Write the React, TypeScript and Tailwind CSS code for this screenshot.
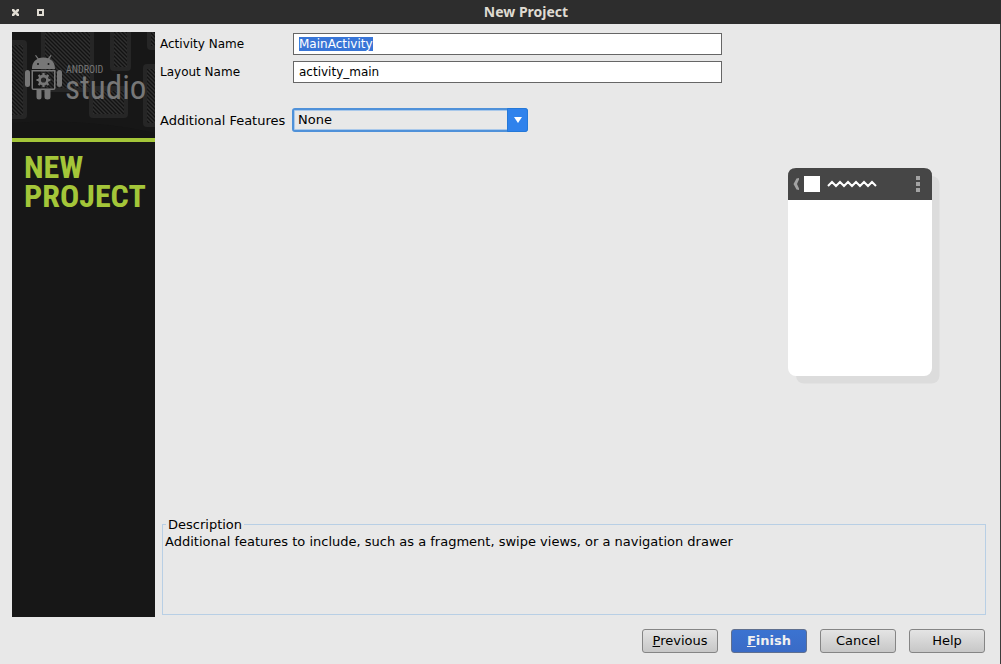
import { useEffect, useRef, useState } from "react";
import type { ReactNode } from "react";

function TitleBar() {
  return (
    <header className="flex h-6 items-center bg-[#2d2d2d] pl-3">
      <button type="button" aria-label="Close" className="flex h-6 w-[7px] items-center justify-center">
        <svg width="7" height="7" viewBox="0 0 7 7" fill="#dfdbd2">
          <path d="M0 0h2l1.500 1.700L5 0h2v2L5.300 3.500 7 5v2H5L3.500 5.300 2 7H0V5l1.700-1.500L0 2z" />
        </svg>
      </button>
      <button type="button" aria-label="Maximize" className="ml-[18px] flex h-6 w-[7px] items-center justify-center">
        <svg width="7" height="7" viewBox="0 0 7 7" fill="#dfdbd2" fillRule="evenodd">
          <path d="M0 0h7v7H0zM2 2v3h3V2z" />
        </svg>
      </button>
      <h1 className="flex-1 pl-[7px] text-center font-['Noto_Sans',sans-serif] text-[14px] font-bold leading-6 text-[#dfdbd2]">
        New Project
      </h1>
    </header>
  );
}

function Device({ x, y, w, h }: { x: number; y: number; w: number; h: number }) {
  return (
    <g>
      <rect x={x} y={y} width={w} height={h} rx="4" fill="#262626" />
      <rect x={x + 4} y={y + 5} width={w - 8} height={h - 9} fill="url(#hatch)" />
    </g>
  );
}

function StudioBanner() {
  return (
    <svg width="143" height="106" viewBox="0 0 143 106" role="img" aria-label="Android Studio" className="block">
      <defs>
        <pattern id="hatch" width="4" height="4" patternUnits="userSpaceOnUse">
          <rect width="4" height="4" fill="#131313" />
          <path d="M-1 -1L5 5M-1 3L1 5M3 -1L5 1" stroke="#303030" strokeWidth="1.400" />
        </pattern>
      </defs>
      <rect width="143" height="106" fill="#171717" />
      <Device x={-12} y={8} w={27} h={79} />
      <Device x={29} y={-8} w={53} h={68} />
      <Device x={98} y={-12} w={21} h={51} />
      <Device x={77} y={54} w={39} h={32} />
      <Device x={131} y={32} w={30} h={63} />
      <Device x={135} y={-10} w={24} h={28} />
      <path d="M0 91C45 87 100 91 143 101V106H0z" fill="#151515" />
      <g fill="#777777">
        <path d="M20 37C20 32 22 28.500 25.500 27L23 23.500 24 23 26.500 26.300Q31.500 24.500 36 26.300L38.500 23 39.500 23.500 37.500 27C41 28.500 43 32 43 37z" />
        <rect x="13" y="38" width="5" height="17" rx="2.500" />
        <rect x="45" y="38" width="5" height="17" rx="2.500" />
        <path fillRule="evenodd" d="M19.500 38H43.500V56Q43.500 58 41.500 58H38.500V65Q38.500 67.500 35.500 67.500T32.500 65V58H29.500V65Q29.500 67.500 27 67.500T24.500 65V58H21.500Q19.500 58 19.500 56zM21 39.500V56.500H42V39.500z" />
        <circle cx="31.500" cy="48" r="4" fill="none" stroke="#777777" strokeWidth="2.800" />
        <path
          d="M31.500 41V44M31.500 52V55M24.500 48H27.500M35.500 48H38.500M26.550 43.050L28.650 45.150M34.350 50.850L36.450 52.950M36.450 43.050L34.350 45.150M28.650 50.850L26.550 52.950"
          stroke="#777777"
          strokeWidth="2.200"
        />
      </g>
      <circle cx="26" cy="32" r="1" fill="#171717" />
      <circle cx="36.500" cy="32" r="1" fill="#171717" />
      <text x="54" y="41" fill="#777777" fontSize="10" className="font-['Roboto_Condensed','Liberation_Sans_Narrow',sans-serif]">
        ANDROID
      </text>
      <text x="53" y="67" fill="#777777" fontSize="33" className="font-['Roboto_Condensed','Liberation_Sans_Narrow',sans-serif]">
        studio
      </text>
    </svg>
  );
}

function Sidebar() {
  return (
    <aside className="flex w-[143px] shrink-0 flex-col bg-[#171717]">
      <StudioBanner />
      <div className="h-1 bg-[#a4c639]" />
      <h2 className="pl-3 pt-[11px] font-['Roboto_Condensed','Liberation_Sans_Narrow',sans-serif] text-[32px] font-bold leading-[29px] text-[#a4c639]">
        NEW
        <br />
        PROJECT
      </h2>
    </aside>
  );
}

function DevicePreview() {
  return (
    <svg width="152" height="216" viewBox="0 0 152 216" role="img" aria-label="Activity preview" className="block">
      <rect x="8" y="8" width="143.500" height="207.500" rx="8" fill="#dcdcdc" />
      <rect width="144" height="208" rx="8" fill="#fff" />
      <path d="M0 32V8Q0 0 8 0H136Q144 0 144 8V32z" fill="#464646" />
      <path d="M11 10L8.500 10.500 5.500 16 8.500 21.500 11 22V20.500L9 16 11 11.500z" fill="#a3a3a3" />
      <rect x="16" y="8" width="16" height="16" fill="#fff" />
      <path d="M40 18L44 14 48 18 52 14 56 18 60 14 64 18 68 14 72 18 76 14 80 18 84 14 88 18" fill="none" stroke="#fff" strokeWidth="2" />
      <path d="M128 8h4v4h-4zM128 14h4v4h-4zM128 20h4v4h-4z" fill="#a3a3a3" />
    </svg>
  );
}

function ActionButton({ children, primary = false }: { children: ReactNode; primary?: boolean }) {
  return (
    <button
      type="button"
      className={
        primary
          ? "h-6 w-[76px] rounded-[3px] border border-[#5f6f8f] bg-linear-to-b from-[#3b73d1] to-[#3a6bc6] text-center font-bold leading-[22px] text-[#f0f0f0]"
          : "h-6 w-[76px] rounded-[3px] border border-[#858585] bg-linear-to-b from-[#e4e4e4] to-[#c7c7c7] text-center leading-[22px]"
      }
    >
      {children}
    </button>
  );
}

export default function App() {
  const nameRef = useRef<HTMLInputElement>(null);
  const [activity, setActivity] = useState("MainActivity");
  const [layout, setLayout] = useState("activity_main");
  const [feature, setFeature] = useState("None");

  useEffect(() => {
    nameRef.current?.focus();
    nameRef.current?.select();
  }, []);

  const field =
    "h-[22px] w-full min-w-0 border border-[#666] bg-white px-[5px] pb-px text-[12px] leading-[15px] outline-none selection:bg-[#3875d7] selection:text-white";

  return (
    <div className="flex min-h-screen flex-col bg-[#e8e8e8] font-['DejaVu_Sans',sans-serif] text-[13px] leading-[15px] text-black">
      <TitleBar />
      <div className="flex flex-1 flex-col border-r border-[#3c3c3c] pb-[11px] pl-3 pt-2">
        <div className="flex flex-1">
          <Sidebar />
          <main className="flex min-w-0 flex-1 flex-col pl-[5px] pr-3.5">
            <form className="grid grid-cols-[133px_1fr] items-center gap-y-1.5 pr-[264px] pt-px">
              <label htmlFor="activity" className="text-[12px] leading-4">
                Activity Name
              </label>
              <input id="activity" ref={nameRef} className={field} value={activity} onChange={(e) => setActivity(e.target.value)} />
              <label htmlFor="layout" className="text-[12px] leading-4">
                Layout Name
              </label>
              <input id="layout" className={field} value={layout} onChange={(e) => setLayout(e.target.value)} />
              <label htmlFor="features" className="mt-[19px] whitespace-nowrap">
                Additional Features
              </label>
              <div className="relative -ml-px mt-[19px] w-[236px]">
                <select
                  id="features"
                  value={feature}
                  onChange={(e) => setFeature(e.target.value)}
                  className="block h-6 w-full appearance-none rounded-[3px] border-2 border-[#4f91d9] bg-[#e8e8e8] px-1 pb-px leading-[15px] inset-ring inset-ring-[#a9c8ea] outline-none"
                >
                  <option>None</option>
                  <option>Include Blank Fragment</option>
                  <option>Swipe Views</option>
                  <option>Navigation Drawer</option>
                </select>
                <span className="pointer-events-none absolute inset-y-0 right-0 flex w-[21px] items-center justify-center rounded-r-[3px] border border-[#2478d8] bg-[#2f82ec]">
                  <svg width="8" height="6" viewBox="0 0 8 6" fill="#fff">
                    <path d="M0 0H8L4 6z" />
                  </svg>
                </span>
              </div>
            </form>
            <div className="mr-[46px] mt-9 self-end">
              <DevicePreview />
            </div>
            <fieldset className="mb-0.5 ml-0.5 mt-auto h-[98px] border border-[#b8cfe5] px-0.5">
              <legend className="ml-px px-0.5">Description</legend>
              <p className="mt-0.5">Additional features to include, such as a fragment, swipe views, or a navigation drawer</p>
            </fieldset>
          </main>
        </div>
        <footer className="flex justify-end gap-[13px] pr-[15px] pt-3">
          <ActionButton>
            <u>P</u>revious
          </ActionButton>
          <ActionButton primary>
            <u>F</u>inish
          </ActionButton>
          <ActionButton>Cancel</ActionButton>
          <ActionButton>Help</ActionButton>
        </footer>
      </div>
    </div>
  );
}
